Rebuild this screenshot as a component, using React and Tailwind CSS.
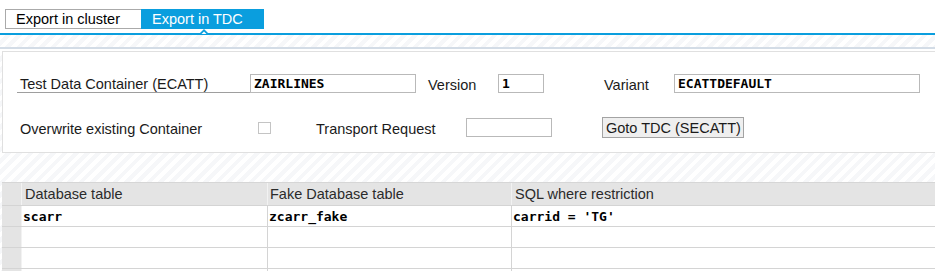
const hatch =
  'bg-[repeating-linear-gradient(135deg,#ffffff_0px,#ffffff_4px,#f6f7f9_4px,#f6f7f9_8px)]';

function Field({ width, value }) {
  return (
    <div
      className={`h-[19px] border border-[#b9b9b9] bg-white pl-[3px] font-['DejaVu_Sans_Mono',monospace] text-[13px] font-bold leading-[17px] text-black ${width}`}
    >
      {value}
    </div>
  );
}

const rows = [
  { table: 'scarr', fake: 'zcarr_fake', where: "carrid = 'TG'" },
  { table: '', fake: '', where: '' },
  { table: '', fake: '', where: '' },
];

export default function App() {
  return (
    <div className="relative h-[271px] w-[935px] overflow-hidden bg-white font-['Liberation_Sans',Arial,sans-serif] text-[14.5px] text-[#1b1b1b]">
      {/* tab strip */}
      <div className="flex h-[33px] items-start pl-[5px] pt-[9px]">
        <div className="flex h-[20px] w-[136px] items-center border border-r-0 border-[#aaaaaa] bg-white pl-[10px] leading-none text-black">
          Export in cluster
        </div>
        <div className="flex h-[20px] w-[123px] items-center bg-[#0a9ede] pl-[11px] leading-none text-white">
          Export in TDC
        </div>
      </div>
      <div className="relative h-[2px] bg-[#0a9ede]">
        <svg className="absolute left-[199px] top-[-4px]" width="10" height="5" viewBox="0 0 10 5">
          <path d="M0 5 L5 0 L10 5 Z" fill="#0a9ede" />
          <path d="M2.5 5 L5 2.5 L7.5 5 Z" fill="#ffffff" />
        </svg>
      </div>

      {/* header hatch strip */}
      <div className={`h-[12px] ${hatch}`} />
      <div className="h-[2px] bg-[#d3dce6]" />
      <div className="h-[2px] bg-white" />

      {/* form panel */}
      <div className={`${hatch} pl-[2px]`}>
        <div className="h-[102px] border border-r-0 border-[#e0e0e0] bg-white pt-[22px]">
          <div className="flex items-center">
            <div className="ml-[14px] flex h-[19px] w-[233px] items-center border-b border-[#9e9e9e] pl-[3px] pt-[3px] leading-none">
              Test Data Container (ECATT)
            </div>
            <Field width="w-[166px]" value="ZAIRLINES" />
            <div className="ml-[12px] w-[70px] pt-[3px] leading-none">Version</div>
            <Field width="w-[46px]" value="1" />
            <div className="ml-[60px] w-[70px] pt-[3px] leading-none">Variant</div>
            <Field width="w-[246px]" value="ECATTDEFAULT" />
          </div>
          <div className="mt-[24px] flex items-center">
            <div className="ml-[17px] w-[238px] pt-[3px] leading-none">Overwrite existing Container</div>
            <div className="h-[12px] w-[13px] border border-[#c4c4c4] bg-white" />
            <div className="ml-[45px] w-[150px] pt-[3px] leading-none">Transport Request</div>
            <div className="h-[19px] w-[86px] border border-[#b9b9b9] bg-white" />
            <div className="ml-[50px] flex h-[21px] w-[142px] items-center border border-[#a3a3a3] bg-[#efefef] pl-[3px] pt-[1px] leading-none">
              Goto TDC (SECATT)
            </div>
          </div>
        </div>
        <div className="h-[29px]" />

        {/* table */}
        <div className="border-t border-[#d6d6d6] bg-white">
          <div className="flex h-[22px] bg-[#e4e4e4] text-[#2b2b2b]">
            <div className="w-[20px] border-r border-[#f2f2f2]" />
            <div className="flex w-[246px] items-center border-r border-[#f2f2f2] pl-[3px] leading-none">Database table</div>
            <div className="flex w-[244px] items-center border-r border-[#f2f2f2] pl-[2px] leading-none">Fake Database table</div>
            <div className="flex flex-1 items-center pl-[3px] leading-none">SQL where restriction</div>
          </div>
          {rows.map((r, i) => (
            <div
              key={i}
              className="flex h-[21px] border-t border-[#d4d4d4] font-['DejaVu_Sans_Mono',monospace] text-[13px] font-bold text-black"
            >
              <div className="w-[20px] border-r border-[#f2f2f2] bg-[#e4e4e4]" />
              <div className="flex w-[246px] items-center border-r border-[#d4d4d4] pl-[1px] leading-none">{r.table}</div>
              <div className="flex w-[244px] items-center border-r border-[#d4d4d4] pl-[1px] leading-none">{r.fake}</div>
              <div className="flex flex-1 items-center pl-[1px] leading-none">{r.where}</div>
            </div>
          ))}
          <div className="flex h-[21px] border-t border-[#d4d4d4]">
            <div className="w-[20px] border-r border-[#f2f2f2] bg-[#e4e4e4]" />
            <div className="w-[246px] border-r border-[#d4d4d4]" />
            <div className="w-[244px] border-r border-[#d4d4d4]" />
          </div>
        </div>
      </div>
    </div>
  );
}
